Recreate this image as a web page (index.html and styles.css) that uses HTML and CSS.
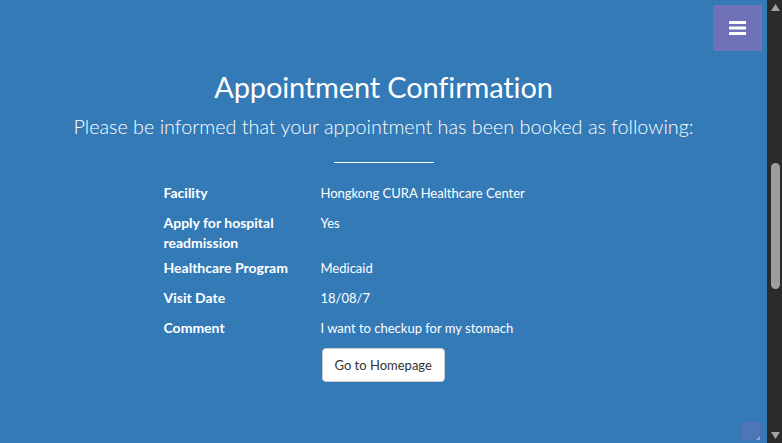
FILE: index.html
```html
<!DOCTYPE html>
<html lang="en">
<head>
<meta charset="utf-8">
<title>CURA Healthcare Service</title>
<link rel="stylesheet" href="styles.css">
</head>
<body>
<main class="page">
  <section class="summary">
    <h2 class="summary-title">Appointment Confirmation</h2>
    <h3 class="summary-lead">Please be informed that your appointment has been booked as following:</h3>
    <hr class="rule">
    <div class="details">
      <div class="label">Facility</div>
      <div class="value">Hongkong CURA Healthcare Center</div>
      <div class="label label-wrap">Apply for hospital readmission</div>
      <div class="value">Yes</div>
      <div class="label">Healthcare Program</div>
      <div class="value">Medicaid</div>
      <div class="label">Visit Date</div>
      <div class="value">18/08/7</div>
      <div class="label">Comment</div>
      <div class="value">I want to checkup for my stomach</div>
      <div class="label"></div>
      <div class="value"><a class="btn" href="#">Go to Homepage</a></div>
    </div>
  </section>

  <a class="menu-toggle" href="#" aria-label="Menu">
    <svg width="17" height="14" viewBox="0 0 17 14" aria-hidden="true">
      <rect x="0" y="0" width="17" height="3" rx="0.6" fill="#fff"/>
      <rect x="0" y="5.5" width="17" height="3" rx="0.6" fill="#fff"/>
      <rect x="0" y="11" width="17" height="3" rx="0.6" fill="#fff"/>
    </svg>
  </a>
  <a class="to-top" href="#" aria-label="Top"><span class="to-top-corner"></span></a>
</main>

<div class="scrollbar" aria-hidden="true">
  <div class="sb-arrow">
    <svg width="9" height="7" viewBox="0 0 9 7"><polygon points="4.5,0 9,7 0,7" fill="#a3a3a3"/></svg>
  </div>
  <div class="sb-track"><div class="sb-thumb"></div></div>
  <div class="sb-arrow">
    <svg width="9" height="7" viewBox="0 0 9 7"><polygon points="0,0 9,0 4.5,7" fill="#a3a3a3"/></svg>
  </div>
</div>
</body>
</html>
```

FILE: styles.css
```css
html {
  background: #337ab7;
}

body {
  margin: 0;
  height: 100vh;
  overflow: hidden;
  display: flex;
  background: #337ab7;
  color: #fff;
  font-family: Lato, "Open Sans", sans-serif;
  font-size: 14px;
  line-height: 20px;
}

.page {
  flex: 1;
  position: relative;
  overflow: hidden;
}

.summary {
  display: flex;
  flex-direction: column;
  align-items: center;
  padding-top: 70px;
}

.summary-title {
  margin: 0;
  font-size: 29px;
  line-height: 33px;
  font-weight: 400;
  letter-spacing: -0.15px;
  color: #fff;
}

.summary-lead {
  margin: 10px 0 0;
  font-size: 19.8px;
  line-height: 26px;
  font-weight: 300;
  color: #fff;
}

.rule {
  width: 100px;
  margin: 23px 0 0;
  border: 0;
  border-top: 1px solid #fff;
}

.details {
  display: grid;
  grid-template-columns: 157px 283px;
  row-gap: 10px;
  margin-top: 20px;
}

.label {
  font-weight: 700;
  padding-right: 20px;
}

.label-wrap {
  margin-bottom: -5px;
}

.value {
  font-size: 13px;
  font-weight: 400;
}

.btn {
  display: inline-block;
  margin-left: 1px;
  padding: 6px 12px;
  font-size: 13px;
  line-height: 20px;
  color: #333;
  background: #fff;
  border: 1px solid #ccc;
  border-radius: 4px;
  text-decoration: none;
}

.menu-toggle {
  position: absolute;
  top: 5px;
  right: 5px;
  width: 49px;
  height: 46px;
  display: flex;
  align-items: center;
  justify-content: center;
  background: #6f72b8;
}

.to-top {
  position: absolute;
  right: 6px;
  bottom: 2px;
  width: 19px;
  height: 19px;
  background: rgba(110, 114, 184, 0.45);
}

.to-top-corner {
  position: absolute;
  right: 1px;
  bottom: 1px;
  width: 0;
  height: 0;
  border-left: 4px solid transparent;
  border-bottom: 4px solid rgba(180, 185, 235, 0.7);
}

.scrollbar {
  width: 15px;
  flex: none;
  display: flex;
  flex-direction: column;
  background: #2b2b2b;
}

.sb-arrow {
  height: 15px;
  display: flex;
  align-items: center;
  justify-content: center;
  padding-left: 1px;
}

.sb-track {
  flex: 1;
  display: flex;
  flex-direction: column;
  align-items: center;
  padding-left: 1px;
}

.sb-thumb {
  margin-top: 148px;
  width: 9px;
  height: 126px;
  border-radius: 4.5px;
  background: #9e9e9e;
}
```
